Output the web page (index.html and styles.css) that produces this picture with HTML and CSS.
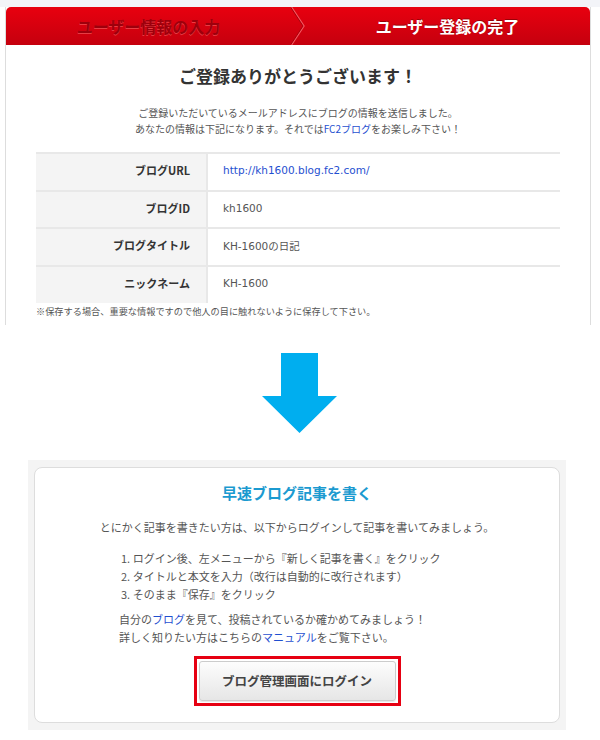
FILE: index.html
```html
<!DOCTYPE html>
<html lang="ja">
<head>
    <meta charset="UTF-8">
    <title>ユーザー登録の完了 - FC2ブログ</title>
    <link rel="stylesheet" href="styles.css">
</head>
<body>
    <div class="top-strip"></div>
    <div class="regist">
        <div class="steps">
            <div class="step step-done">ユーザー情報の入力</div>
            <svg class="step-sep" width="14" height="38" viewBox="0 0 14 38">
                <polyline points="0.5,0 13,19 0.5,38" fill="none" stroke="#f4555f" stroke-width="1.4"/>
                <polyline points="-0.5,0 12,19 -0.5,38" fill="none" stroke="#a8000c" stroke-width="1"/>
            </svg>
            <div class="step step-now">ユーザー登録の完了</div>
        </div>
        <h2 class="regist-title">ご登録ありがとうございます！</h2>
        <p class="regist-lead">ご登録いただいているメールアドレスにブログの情報を送信しました。<br>あなたの情報は下記になります。それでは<a href="#">FC2ブログ</a>をお楽しみ下さい！</p>
        <table class="info">
            <tr><th>ブログURL</th><td><a href="#">http://kh1600.blog.fc2.com/</a></td></tr>
            <tr><th>ブログID</th><td>kh1600</td></tr>
            <tr><th>ブログタイトル</th><td>KH-1600の日記</td></tr>
            <tr><th>ニックネーム</th><td>KH-1600</td></tr>
        </table>
        <p class="note">※保存する場合、重要な情報ですので他人の目に触れないように保存して下さい。</p>
    </div>

    <div class="arrow">
        <svg width="76" height="80" viewBox="0 0 76 80">
            <polygon points="19,0 56,0 56,43 75,43 37.5,80 0,43 19,43" fill="#00aeef"/>
        </svg>
    </div>

    <div class="next">
        <div class="next-box">
            <h3 class="next-title">早速ブログ記事を書く</h3>
            <p class="next-lead">とにかく記事を書きたい方は、以下からログインして記事を書いてみましょう。</p>
            <ol class="next-list">
                <li>1. ログイン後、左メニューから『新しく記事を書く』をクリック</li>
                <li>2. タイトルと本文を入力（改行は自動的に改行されます）</li>
                <li>3. そのまま『保存』をクリック</li>
            </ol>
            <p class="next-text">自分の<a href="#">ブログ</a>を見て、投稿されているか確かめてみましょう！<br>詳しく知りたい方はこちらの<a href="#">マニュアル</a>をご覧下さい。</p>
            <div class="login-wrap">
                <a class="login-btn" href="#">ブログ管理画面にログイン</a>
            </div>
        </div>
    </div>
</body>
</html>
```

FILE: styles.css
```css
body { margin: 0; background: #fff; font-family: "Noto Sans CJK JP", "Noto Sans", sans-serif; color: #444; }
a { color: #1f4fd0; text-decoration: none; }
.top-strip { height: 7px; background: #f3f4f8; }

.regist { width: 584px; height: 318px; margin-left: 5px; border-left: 1px solid #ddd; border-right: 1px solid #ddd; overflow: hidden; }
.steps { display: flex; height: 38px; border-radius: 5px 5px 0 0; background: linear-gradient(#e8000f, #c5000e); }
.step { flex: 1; display: flex; align-items: center; justify-content: center; font-size: 16px; font-weight: bold; }
.step-done { color: #9d000c; text-shadow: 0 1px 0 rgba(255,120,120,0.5); }
.step-now { color: #fff; text-shadow: 0 -1px 0 rgba(110,0,0,0.6); }
.step-sep { flex: none; }

.regist-title { margin: 19px 0 0; font-size: 17px; line-height: 24px; text-align: center; color: #333; }
.regist-lead { margin: 17px 0 0; font-size: 10px; line-height: 16px; text-align: center; color: #555; }

.info { width: 524px; margin: 15px 0 0 30px; border-collapse: collapse; }
.info th, .info td { box-sizing: border-box; height: 37.5px; border-top: 2px solid #e8e8e8; padding: 0; font-size: 11px; }
.info th { width: 171px; padding: 0 16px 3px 0; background: #f4f4f4; border-right: 2px solid #e8e8e8; text-align: right; color: #333; }
.info td { padding: 0 0 3px 15px; text-align: left; font-family: "DejaVu Sans", "Noto Sans CJK JP", sans-serif; font-size: 10.5px; color: #555; }
.note { margin: 1px 0 0 30px; font-size: 9.2px; line-height: 14px; color: #555; }

.arrow { display: flex; justify-content: center; padding: 28px 0 27px; }

.next { width: 526px; margin-left: 28px; padding: 7px 6px; background: #f4f4f4; }
.next-box { background: #fff; border: 1px solid #ddd; border-radius: 8px; padding: 14px 0 16px; }
.next-title { margin: 0; font-size: 15px; line-height: 22px; text-align: center; color: #1b9ad0; }
.next-lead { margin: 14px 0 0; font-size: 11px; line-height: 18px; text-align: center; color: #555; }
.next-list { margin: 13px 0 0; padding: 0 0 0 86px; list-style: none; font-size: 11px; line-height: 18px; color: #555; }
.next-text { margin: 7px 0 0; padding-left: 84px; font-size: 11px; line-height: 18px; color: #555; }
.login-wrap { width: 197px; margin: 10px auto 0; border: 3px solid #e60012; padding: 2px; }
.login-btn { display: block; height: 38px; line-height: 38px; border: 1px solid #ccc; border-radius: 3px; background: linear-gradient(#fdfdfd, #e6e6e6); box-shadow: 0 1px 1px rgba(0,0,0,0.1); text-align: center; font-size: 12.5px; font-weight: bold; color: #444; }
```
